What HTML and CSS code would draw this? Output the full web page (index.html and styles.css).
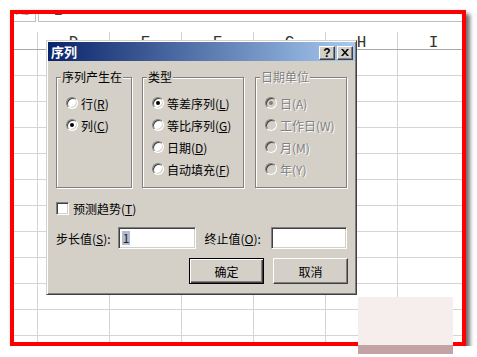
FILE: index.html
```html
<!DOCTYPE html>
<html lang="zh-CN">
<head>
    <meta charset="UTF-8">
    <title>序列</title>
    <link rel="stylesheet" href="styles.css">
</head>
<body>
    <div class="frame">
        <div class="fbar">
            <div class="namebox"><span>A1</span></div>
            <div class="formula"><span>1</span></div>
        </div>

        <div class="sheet-head">
            <div class="cell corner"></div>
            <div class="cell col">D</div>
            <div class="cell col">E</div>
            <div class="cell col">F</div>
            <div class="cell col">G</div>
            <div class="cell col">H</div>
            <div class="cell col">I</div>
        </div>
        <div class="row"><div class="cell corner"></div><div class="cell col"></div><div class="cell col"></div><div class="cell col"></div><div class="cell col"></div><div class="cell col"></div><div class="cell col"></div></div>
        <div class="row"><div class="cell corner"></div><div class="cell col"></div><div class="cell col"></div><div class="cell col"></div><div class="cell col"></div><div class="cell col"></div><div class="cell col"></div></div>
        <div class="row"><div class="cell corner"></div><div class="cell col"></div><div class="cell col"></div><div class="cell col"></div><div class="cell col"></div><div class="cell col"></div><div class="cell col"></div></div>
        <div class="row"><div class="cell corner"></div><div class="cell col"></div><div class="cell col"></div><div class="cell col"></div><div class="cell col"></div><div class="cell col"></div><div class="cell col"></div></div>
        <div class="row"><div class="cell corner"></div><div class="cell col"></div><div class="cell col"></div><div class="cell col"></div><div class="cell col"></div><div class="cell col"></div><div class="cell col"></div></div>
        <div class="row"><div class="cell corner"></div><div class="cell col"></div><div class="cell col"></div><div class="cell col"></div><div class="cell col"></div><div class="cell col"></div><div class="cell col"></div></div>
        <div class="row"><div class="cell corner"></div><div class="cell col"></div><div class="cell col"></div><div class="cell col"></div><div class="cell col"></div><div class="cell col"></div><div class="cell col"></div></div>
        <div class="row"><div class="cell corner"></div><div class="cell col"></div><div class="cell col"></div><div class="cell col"></div><div class="cell col"></div><div class="cell col"></div><div class="cell col"></div></div>
        <div class="row"><div class="cell corner"></div><div class="cell col"></div><div class="cell col"></div><div class="cell col"></div><div class="cell col"></div><div class="cell col"></div><div class="cell col"></div></div>
        <div class="row"><div class="cell corner"></div><div class="cell col"></div><div class="cell col"></div><div class="cell col"></div><div class="cell col"></div><div class="cell col"></div><div class="cell col"></div></div>
        <div class="row"><div class="cell corner"></div><div class="cell col"></div><div class="cell col"></div><div class="cell col"></div><div class="cell col"></div><div class="cell col"></div><div class="cell col"></div></div>
        <div class="row"><div class="cell corner"></div><div class="cell col"></div><div class="cell col"></div><div class="cell col"></div><div class="cell col"></div><div class="cell col"></div><div class="cell col"></div></div>

        <!-- Series dialog -->
        <div class="dialog">
            <div class="titlebar">
                <span class="title">序列</span>
                <span class="tbtn help">?</span>
                <span class="tbtn">
                    <svg width="8" height="7" viewBox="0 0 8 7"><path d="M0 0h2l2 2.4L6 0h2L5 3.5 8 7H6L4 4.6 2 7H0l3-3.5z" fill="#000"/></svg>
                </span>
            </div>
            <div class="dlg-body">
                <div class="groups">
                    <div class="group g1">
                        <div class="group-title">序列产生在</div>
                        <div class="opt"><span class="radio"></span>行(<u>R</u>)</div>
                        <div class="opt"><span class="radio on"></span>列(<u>C</u>)</div>
                    </div>
                    <div class="group g2">
                        <div class="group-title">类型</div>
                        <div class="opt"><span class="radio on"></span>等差序列(<u>L</u>)</div>
                        <div class="opt"><span class="radio"></span>等比序列(<u>G</u>)</div>
                        <div class="opt"><span class="radio"></span>日期(<u>D</u>)</div>
                        <div class="opt"><span class="radio"></span>自动填充(<u>F</u>)</div>
                    </div>
                    <div class="group g3 disabled">
                        <div class="group-title">日期单位</div>
                        <div class="opt"><span class="radio on"></span>日(A)</div>
                        <div class="opt"><span class="radio"></span>工作日(W)</div>
                        <div class="opt"><span class="radio"></span>月(M)</div>
                        <div class="opt"><span class="radio"></span>年(Y)</div>
                    </div>
                </div>

                <div class="check-row">
                    <span class="checkbox"></span>预测趋势(<u>T</u>)
                </div>

                <div class="step-row">
                    <span class="lbl lbl-step">步长值(<u>S</u>):</span>
                    <span class="field f-step"><span class="sel">1</span></span>
                    <span class="lbl lbl-stop">终止值(<u>O</u>):</span>
                    <span class="field f-stop"></span>
                </div>

                <div class="btn-row">
                    <span class="btn default">确定</span>
                    <span class="btn">取消</span>
                </div>
            </div>
        </div>
    </div>

    <div class="stamp"></div>
</body>
</html>
```

FILE: styles.css
```css
* {
    box-sizing: border-box;
}
body {
    margin: 0;
    background: #fff;
    font-family: "Noto Sans CJK SC", sans-serif;
}
.frame {
    position: relative;
    margin: 10px 0 0 10px;
    width: 456px;
    height: 336px;
    border: 4px solid #ff0000;
    background: #fff;
    overflow: hidden;
    box-shadow: 4px 4px 4px rgba(0, 0, 0, .55), 0 0 3px rgba(0, 0, 0, .12);
}

/* formula bar (cut off at top) */
.fbar {
    display: flex;
    height: 8px;
}
.namebox {
    width: 22px;
    border-right: 1px solid #c0c0c0;
    border-bottom: 1px solid #c0c0c0;
}
.namebox span {
    display: block;
    margin-top: -9px;
    padding-left: 2px;
    font-family: "Liberation Sans", sans-serif;
    font-size: 11px;
    line-height: 12px;
    color: #999;
}
.formula {
    flex: 1;
    margin-left: 2px;
    border-left: 1px solid #c0c0c0;
    border-bottom: 1px solid #c0c0c0;
}
.formula span {
    display: block;
    margin: -9px 0 0 15px;
    font-family: "Liberation Mono", monospace;
    font-size: 14px;
    line-height: 12px;
    color: #444;
}

/* sheet grid */
.sheet-head {
    display: flex;
    padding-top: 10px;
    border-bottom: 1px solid #a8a8a8;
}
.row {
    display: flex;
    height: 26px;
    border-bottom: 1px solid #d4d4d4;
}
.cell {
    flex-shrink: 0;
    border-right: 1px solid #d4d4d4;
}
.corner {
    width: 24px;
}
.col {
    width: 72px;
}
.sheet-head .cell {
    height: 17px;
    padding-top: 4px;
    font-family: "Liberation Mono", monospace;
    font-size: 16px;
    line-height: 14px;
    color: #333;
    text-align: center;
}

/* dialog */
.dialog {
    position: absolute;
    left: 32px;
    top: 26px;
    width: 311px;
    height: 255px;
    padding: 1px;
    background: #d4d0c8;
    border: 1px solid;
    border-color: #d4d0c8 #404040 #404040 #d4d0c8;
    box-shadow: inset 1px 1px #fff, inset -1px -1px #808080;
    font-size: 12px;
    color: #000;
}
.titlebar {
    display: flex;
    align-items: center;
    height: 19px;
    padding: 0 2px 0 3px;
    background: linear-gradient(to right, #0a246a, #a6caf0);
}
.title {
    flex: 1;
    color: #fff;
    font-size: 13px;
    font-weight: bold;
    line-height: 19px;
}
.tbtn {
    display: flex;
    align-items: center;
    justify-content: center;
    width: 16px;
    height: 14px;
    margin-top: 2px;
    background: #d4d0c8;
    border: 1px solid;
    border-color: #fff #404040 #404040 #fff;
    box-shadow: inset -1px -1px #808080;
}
.tbtn + .tbtn {
    margin-left: 2px;
}
.help {
    font-family: "Liberation Sans", sans-serif;
    font-size: 12px;
    font-weight: bold;
    line-height: 1;
}

.dlg-body {
    padding: 16px 8px 0;
}
.groups {
    display: flex;
}
.group {
    height: 111px;
    padding-left: 9px;
    border: 1px solid #808080;
    box-shadow: inset 1px 1px #fff, 1px 1px #fff;
}
.g1 { width: 76px; }
.g2 { width: 102px; margin-left: 10px; }
.g3 { width: 92px; margin-left: 11px; }
.group-title {
    display: table;
    margin: -7px 0 9px -5px;
    padding: 0 1px;
    background: #d4d0c8;
    line-height: 12px;
}
.opt {
    display: flex;
    align-items: center;
    height: 22px;
    white-space: nowrap;
}
.radio {
    position: relative;
    flex-shrink: 0;
    width: 12px;
    height: 12px;
    margin-right: 3px;
    border-radius: 50%;
    background: #fff;
    border: 1px solid;
    border-color: #808080 #fff #fff #808080;
    box-shadow: inset 1px 1px #404040, inset -1px -1px #d4d0c8;
}
.radio.on::after {
    content: "";
    position: absolute;
    left: 3px;
    top: 3px;
    width: 4px;
    height: 4px;
    border-radius: 50%;
    background: #000;
}
.disabled .group-title,
.disabled .opt {
    color: #808080;
    text-shadow: 1px 1px #fff;
}
.disabled .radio {
    background: #d4d0c8;
}
.disabled .radio.on::after {
    background: #808080;
}

.check-row {
    display: flex;
    align-items: center;
    height: 13px;
    margin-top: 14px;
}
.checkbox {
    width: 13px;
    height: 13px;
    margin-right: 4px;
    background: #fff;
    border: 1px solid;
    border-color: #808080 #fff #fff #808080;
    box-shadow: inset 1px 1px #404040, inset -1px -1px #d4d0c8;
}

.step-row {
    display: flex;
    align-items: center;
    height: 22px;
    margin-top: 12px;
}
.lbl-step { width: 62px; }
.lbl-stop { width: 67px; margin-left: 9px; }
.field {
    display: flex;
    align-items: center;
    height: 22px;
    padding-left: 3px;
    background: #fff;
    border: 1px solid;
    border-color: #808080 #fff #fff #808080;
    box-shadow: inset 1px 1px #404040, inset -1px -1px #d4d0c8;
}
.f-step { width: 78px; }
.f-stop { width: 76px; }
.sel {
    padding: 0 1px;
    background: #b1bccf;
    color: #222;
    line-height: 14px;
}

.btn-row {
    display: flex;
    justify-content: flex-end;
    gap: 9px;
    margin: 9px -1px 0 0;
}
.btn {
    display: flex;
    align-items: center;
    justify-content: center;
    width: 75px;
    height: 26px;
    background: #d4d0c8;
    border: 1px solid;
    border-color: #fff #404040 #404040 #fff;
    box-shadow: inset -1px -1px #808080;
}
.btn.default {
    border-color: #000;
    box-shadow: inset 1px 1px #fff, inset -1px -1px #404040, inset -2px -2px #808080;
}

/* watermark patch in the corner */
.stamp {
    position: absolute;
    left: 358px;
    top: 297px;
    width: 95px;
    height: 57px;
    background: #f6eded;
    border-bottom: 9px solid #c3a3a3;
}
```
